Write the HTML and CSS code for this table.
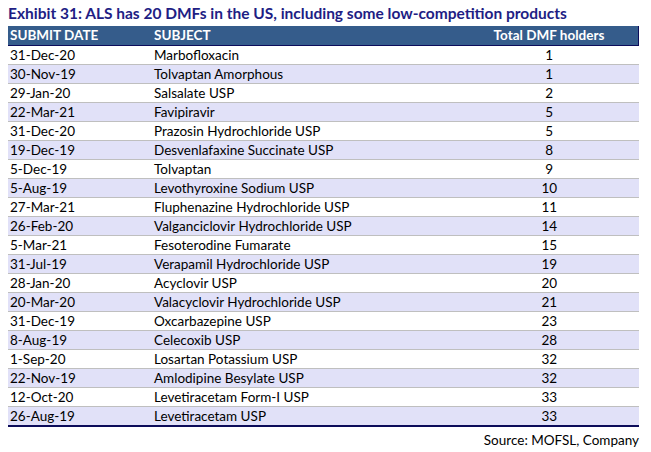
FILE: index.html
```html
<!DOCTYPE html>
<html>
<head>
<meta charset="utf-8">
<link rel="stylesheet" href="styles.css">
</head>
<body>
<div class="exhibit">
  <h1 class="title">Exhibit 31: ALS has 20 DMFs in the US, including some low-competition products</h1>
  <table class="dmf">
    <thead>
      <tr><th class="c-date">SUBMIT DATE</th><th class="c-subj">SUBJECT</th><th class="c-num">Total DMF holders</th></tr>
    </thead>
    <tbody>
      <tr><td>31-Dec-20</td><td>Marbofloxacin</td><td class="c-num">1</td></tr>
      <tr><td>30-Nov-19</td><td>Tolvaptan Amorphous</td><td class="c-num">1</td></tr>
      <tr><td>29-Jan-20</td><td>Salsalate USP</td><td class="c-num">2</td></tr>
      <tr><td>22-Mar-21</td><td>Favipiravir</td><td class="c-num">5</td></tr>
      <tr><td>31-Dec-20</td><td>Prazosin Hydrochloride USP</td><td class="c-num">5</td></tr>
      <tr><td>19-Dec-19</td><td>Desvenlafaxine Succinate USP</td><td class="c-num">8</td></tr>
      <tr><td>5-Dec-19</td><td>Tolvaptan</td><td class="c-num">9</td></tr>
      <tr><td>5-Aug-19</td><td>Levothyroxine Sodium USP</td><td class="c-num">10</td></tr>
      <tr><td>27-Mar-21</td><td>Fluphenazine Hydrochloride USP</td><td class="c-num">11</td></tr>
      <tr><td>26-Feb-20</td><td>Valganciclovir Hydrochloride USP</td><td class="c-num">14</td></tr>
      <tr><td>5-Mar-21</td><td>Fesoterodine Fumarate</td><td class="c-num">15</td></tr>
      <tr><td>31-Jul-19</td><td>Verapamil Hydrochloride USP</td><td class="c-num">19</td></tr>
      <tr><td>28-Jan-20</td><td>Acyclovir USP</td><td class="c-num">20</td></tr>
      <tr><td>20-Mar-20</td><td>Valacyclovir Hydrochloride USP</td><td class="c-num">21</td></tr>
      <tr><td>31-Dec-19</td><td>Oxcarbazepine USP</td><td class="c-num">23</td></tr>
      <tr><td>8-Aug-19</td><td>Celecoxib USP</td><td class="c-num">28</td></tr>
      <tr><td>1-Sep-20</td><td>Losartan Potassium USP</td><td class="c-num">32</td></tr>
      <tr><td>22-Nov-19</td><td>Amlodipine Besylate USP</td><td class="c-num">32</td></tr>
      <tr><td>12-Oct-20</td><td>Levetiracetam Form-I USP</td><td class="c-num">33</td></tr>
      <tr><td>26-Aug-19</td><td>Levetiracetam USP</td><td class="c-num">33</td></tr>
    </tbody>
  </table>
  <p class="source">Source: MOFSL, Company</p>
</div>
</body>
</html>
```

FILE: styles.css
```css
html, body {
  margin: 0;
  padding: 0;
  background: #ffffff;
}
body {
  font-family: Lato, "Liberation Sans", sans-serif;
  color: #000000;
}
.exhibit {
  padding: 3px 12px 0 8px;
  width: 631px;
}
.title {
  margin: 0 0 3px 0;
  font-size: 15.5px;
  line-height: 20px;
  font-weight: 700;
  color: #211d84;
  white-space: nowrap;
}
.dmf {
  width: 631px;
  border-collapse: collapse;
  font-size: 13.5px;
  table-layout: fixed;
}
.dmf th {
  background: #355c8b;
  color: #ffffff;
  font-weight: 700;
  height: 19px;
  padding: 0;
  text-align: left;
  line-height: 19px;
  border-bottom: 1px solid #0c0c5a;
}
.dmf th.c-num { text-align: center; border-right: 1px solid #0c0c5a; }
.dmf .c-date { width: 140px; padding-left: 2px; }
.dmf .c-subj { width: 306px; padding-left: 4px; }
.dmf td {
  height: 18px;
  padding: 0;
  line-height: 18px;
  border-bottom: 1px solid #bfbfbf;
  white-space: nowrap;
}
.dmf td:first-child { padding-left: 2px; }
.dmf td:nth-child(2) { padding-left: 4px; }
.dmf td.c-num { text-align: center; }
.dmf tbody tr:nth-child(even) td { background: #e1e1f8; }
.dmf tbody tr:last-child td { border-bottom: 2px solid #0c0c5a; }
.source {
  margin: 5px 0 0 0;
  text-align: right;
  font-size: 13.5px;
  line-height: 16px;
}
```
